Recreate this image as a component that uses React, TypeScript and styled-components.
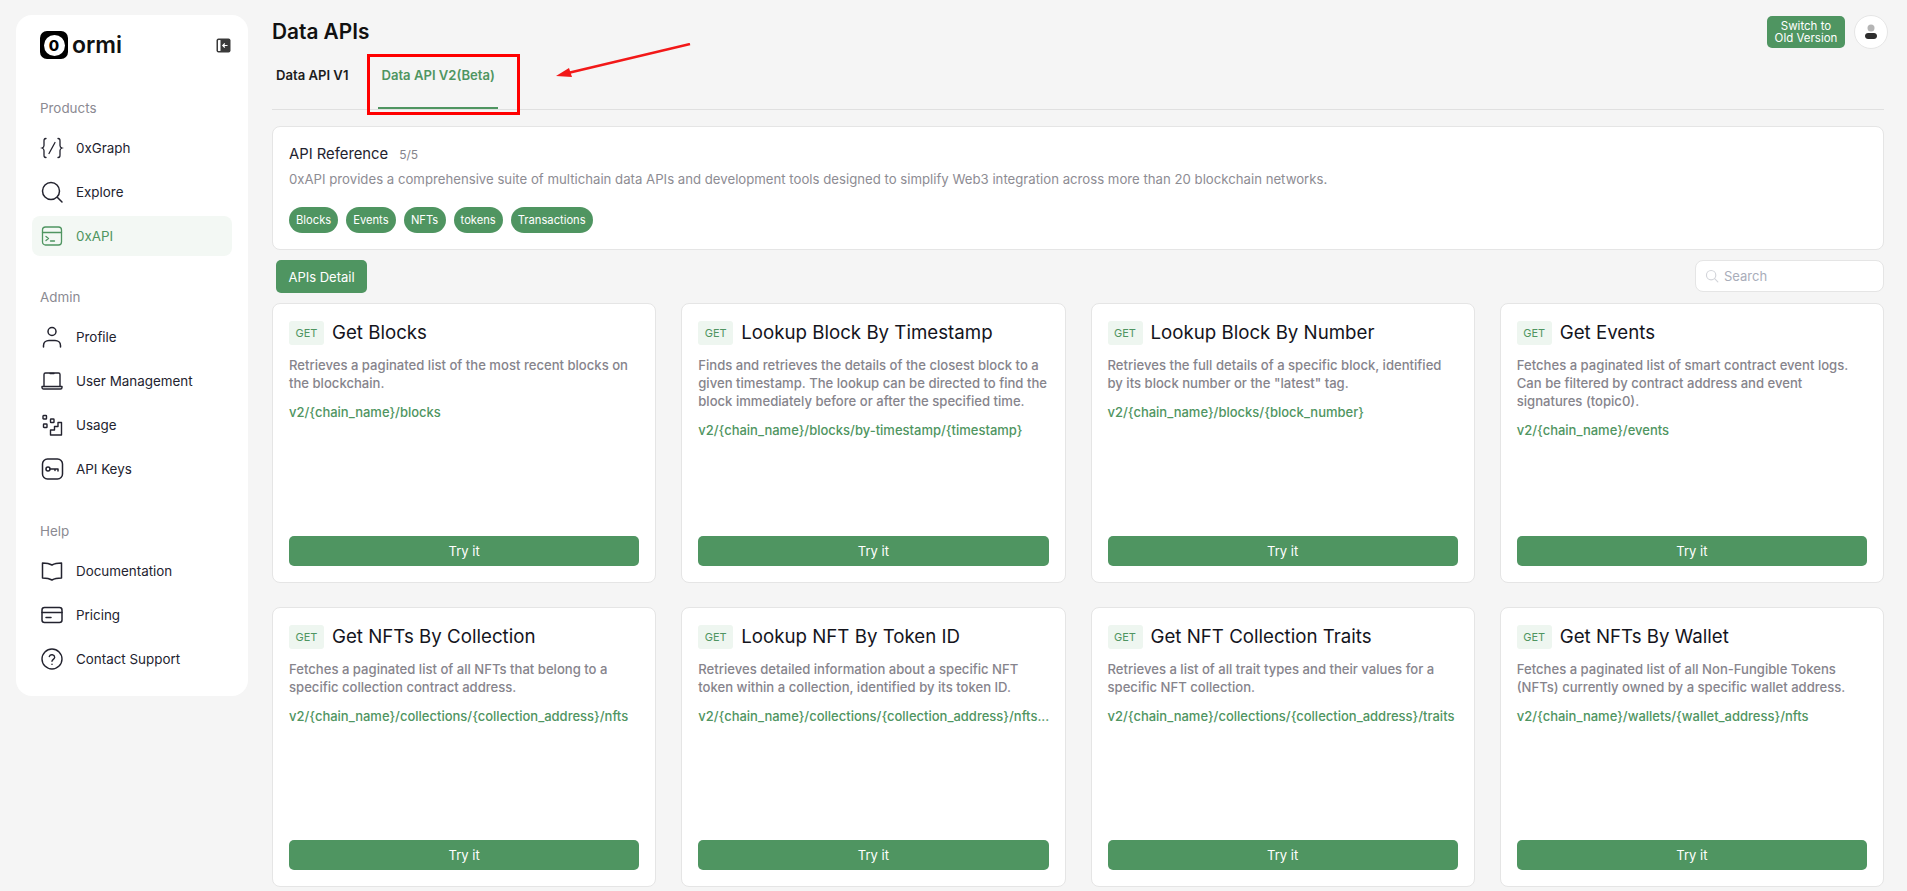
import styled, { createGlobalStyle } from "styled-components";

const GREEN = "#4f9561";

const GlobalStyle = createGlobalStyle`
  html, body {
    margin: 0;
    padding: 0;
    height: 891px;
    overflow: hidden;
    background: #f5f5f5;
    font-family: "Inter", "Liberation Sans", sans-serif;
  }
  * {
    box-sizing: border-box;
  }
`;

const IconCode = () => (
  <svg width="24" height="24" viewBox="0 0 24 24" fill="none" stroke="currentColor" strokeWidth="1.3" strokeLinecap="round">
    <path d="M6 2.500C3.800 2.500 4 4 4 6v3.500c0 1.300-.6 2-2 2.500 1.400.5 2 1.200 2 2.500V18c0 2-.2 3.500 2 3.500" />
    <path d="M18 2.500c2.200 0 2 1.500 2 3.500v3.500c0 1.300.6 2 2 2.500-1.400.5-2 1.200-2 2.500V18c0 2 .2 3.500-2 3.500" />
    <path d="M15 6.500 9 17.500" />
  </svg>
);
const IconSearch = () => (
  <svg width="24" height="24" viewBox="0 0 24 24" fill="none" stroke="currentColor" strokeWidth="1.5" strokeLinecap="round">
    <circle cx="11" cy="11" r="8.500" />
    <path d="m17.500 17.500 4.500 4.500" />
  </svg>
);
const IconTerminal = () => (
  <svg width="24" height="24" viewBox="0 0 24 24" fill="none" stroke="currentColor" strokeWidth="1.3" strokeLinecap="round" strokeLinejoin="round">
    <rect x="2.500" y="3" width="19" height="18" rx="3" />
    <path d="M2.500 8.500h19" />
    <path d="m6 12.500 2.500 2-2.500 2" />
    <path d="M10.500 17h4" />
  </svg>
);
const IconUser = () => (
  <svg width="24" height="24" viewBox="0 0 24 24" fill="none" stroke="currentColor" strokeWidth="1.5" strokeLinecap="round">
    <circle cx="12" cy="6.500" r="4" />
    <path d="M3.500 22v-1.500c0-3 2.500-5 5.500-5h6c3 0 5.500 2 5.500 5V22" />
  </svg>
);
const IconLaptop = () => (
  <svg width="24" height="24" viewBox="0 0 24 24" fill="none" stroke="currentColor" strokeWidth="1.4" strokeLinecap="round" strokeLinejoin="round">
    <path d="M4 17V5.500C4 4.700 4.700 4 5.500 4h13c.8 0 1.500.7 1.500 1.500V17" />
    <path d="M2 17.500h20v1c0 .8-.7 1.500-1.500 1.500h-17C2.700 20 2 19.300 2 18.500z" />
    <path d="M10 4.500h4" />
  </svg>
);
const IconUsage = () => (
  <svg width="24" height="24" viewBox="0 0 24 24" fill="none" stroke="currentColor" strokeWidth="1.400" strokeLinejoin="round">
    <rect x="3" y="2.500" width="3.500" height="3.500" rx=".6" />
    <rect x="10.500" y="6" width="3.500" height="3.500" rx=".6" />
    <rect x="3.500" y="11" width="3.500" height="3.500" rx=".6" />
    <path d="M21.500 9.500v12.500h-11v-5h4v-3.500h3.500V9.500z" />
  </svg>
);
const IconKey = () => (
  <svg width="24" height="24" viewBox="0 0 24 24" fill="none" stroke="currentColor" strokeWidth="1.500" strokeLinecap="round" strokeLinejoin="round">
    <rect x="2.500" y="2" width="20" height="20" rx="5" />
    <circle cx="8" cy="12" r="2" />
    <path d="M10 12h8v2M15 12v1.500" />
  </svg>
);
const IconBook = () => (
  <svg width="24" height="24" viewBox="0 0 24 24" fill="none" stroke="currentColor" strokeWidth="1.500" strokeLinejoin="round">
    <path d="M2.500 4c3.500 0 7 .5 9.500 2 2.500-1.500 6-2 9.500-2v15c-3.500 0-7 .5-9.500 2-2.500-1.500-6-2-9.500-2z" />
  </svg>
);
const IconCard = () => (
  <svg width="24" height="24" viewBox="0 0 24 24" fill="none" stroke="currentColor" strokeWidth="1.500" strokeLinecap="round">
    <rect x="2" y="4.500" width="20" height="15" rx="2.500" />
    <path d="M2 9.500h20" />
    <path d="M6 14.500h5" />
  </svg>
);
const IconHelp = () => (
  <svg width="24" height="24" viewBox="0 0 24 24" fill="none" stroke="currentColor" strokeWidth="1.400" strokeLinecap="round">
    <circle cx="12" cy="12" r="10" />
    <path d="M9.300 9.500a2.800 2.800 0 0 1 5.400.8c0 1.800-2.700 2.300-2.700 4" />
    <path d="M12 17.300v.1" />
  </svg>
);

const navGroups = [
  {
    title: "Products",
    items: [
      { label: "0xGraph", icon: <IconCode /> },
      { label: "Explore", icon: <IconSearch /> },
      { label: "0xAPI", icon: <IconTerminal />, active: true },
    ],
  },
  {
    title: "Admin",
    items: [
      { label: "Profile", icon: <IconUser /> },
      { label: "User Management", icon: <IconLaptop /> },
      { label: "Usage", icon: <IconUsage /> },
      { label: "API Keys", icon: <IconKey /> },
    ],
  },
  {
    title: "Help",
    items: [
      { label: "Documentation", icon: <IconBook /> },
      { label: "Pricing", icon: <IconCard /> },
      { label: "Contact Support", icon: <IconHelp /> },
    ],
  },
];

const tags = ["Blocks", "Events", "NFTs", "tokens", "Transactions"];

const apis = [
  {
    name: "Get Blocks",
    desc: "Retrieves a paginated list of the most recent blocks on the blockchain.",
    path: "v2/{chain_name}/blocks",
  },
  {
    name: "Lookup Block By Timestamp",
    desc: "Finds and retrieves the details of the closest block to a given timestamp. The lookup can be directed to find the block immediately before or after the specified time.",
    path: "v2/{chain_name}/blocks/by-timestamp/{timestamp}",
  },
  {
    name: "Lookup Block By Number",
    desc: 'Retrieves the full details of a specific block, identified by its block number or the "latest" tag.',
    path: "v2/{chain_name}/blocks/{block_number}",
  },
  {
    name: "Get Events",
    desc: "Fetches a paginated list of smart contract event logs. Can be filtered by contract address and event signatures (topic0).",
    path: "v2/{chain_name}/events",
  },
  {
    name: "Get NFTs By Collection",
    desc: "Fetches a paginated list of all NFTs that belong to a specific collection contract address.",
    path: "v2/{chain_name}/collections/{collection_address}/nfts",
  },
  {
    name: "Lookup NFT By Token ID",
    desc: "Retrieves detailed information about a specific NFT token within a collection, identified by its token ID.",
    path: "v2/{chain_name}/collections/{collection_address}/nfts...",
  },
  {
    name: "Get NFT Collection Traits",
    desc: "Retrieves a list of all trait types and their values for a specific NFT collection.",
    path: "v2/{chain_name}/collections/{collection_address}/traits",
  },
  {
    name: "Get NFTs By Wallet",
    desc: "Fetches a paginated list of all Non-Fungible Tokens (NFTs) currently owned by a specific wallet address.",
    path: "v2/{chain_name}/wallets/{wallet_address}/nfts",
  },
];

export default function App() {
  return (
    <>
      <GlobalStyle />
      <Page>
        <Sidebar>
          <LogoRow>
            <Logo>
              <LogoMark>
                <LogoZero>0</LogoZero>
              </LogoMark>
              <LogoText>ormi</LogoText>
            </Logo>
            <CollapseButton>
              <svg width="15" height="15" viewBox="0 0 15 15">
                <rect x="0.500" y="0.500" width="14" height="14" rx="2" fill="#3a3a3a" />
                <rect x="2" y="2" width="2.500" height="11" rx=".5" fill="#fff" />
                <path d="M11.500 7.500H7M8.800 5.500l-2 2 2 2" fill="none" stroke="#fff" strokeWidth="1.200" />
              </svg>
            </CollapseButton>
          </LogoRow>
          {navGroups.map((group) => (
            <NavGroup key={group.title}>
              <GroupTitle>{group.title}</GroupTitle>
              <NavList>
                {group.items.map((item) => (
                  <NavItem key={item.label} $active={item.active}>
                    <NavIcon>{item.icon}</NavIcon>
                    {item.label}
                  </NavItem>
                ))}
              </NavList>
            </NavGroup>
          ))}
        </Sidebar>

        <Main>
          <Header>
            <Title>Data APIs</Title>
            <HeaderActions>
              <SwitchButton>
                Switch to
                <br />
                Old Version
              </SwitchButton>
              <Avatar>
                <svg width="14" height="16" viewBox="0 0 14 16">
                  <circle cx="7" cy="4" r="3.500" fill="#b5b5b5" />
                  <path d="M1 12c0-2 1.500-3 3-3h6c1.500 0 3 1 3 3s-1.500 3-3 3H4c-1.500 0-3-1-3-3z" fill="#2e2e2e" />
                </svg>
              </Avatar>
            </HeaderActions>
          </Header>

          <Tabs>
            <Tab>Data API V1</Tab>
            <Tab $active>Data API V2(Beta)</Tab>
            <RedBox />
            <RedArrow width="140" height="40" viewBox="0 0 140 40">
              <path d="M136 1 14 30" stroke="#f21818" strokeWidth="2.500" fill="none" />
              <path d="M2 33 15 25 18 34z" fill="#f21818" />
            </RedArrow>
          </Tabs>

          <ReferenceCard>
            <ReferenceHeading>
              <ReferenceTitle>API Reference</ReferenceTitle>
              <ReferenceCount>5/5</ReferenceCount>
            </ReferenceHeading>
            <ReferenceText>
              0xAPI provides a comprehensive suite of multichain data APIs and development tools designed to simplify Web3 integration across more than 20 blockchain networks.
            </ReferenceText>
            <TagRow>
              {tags.map((tag) => (
                <Tag key={tag}>{tag}</Tag>
              ))}
            </TagRow>
          </ReferenceCard>

          <Toolbar>
            <DetailButton>APIs Detail</DetailButton>
            <SearchBox>
              <svg width="14" height="14" viewBox="0 0 24 24" fill="none" stroke="#d3d5da" strokeWidth="2" strokeLinecap="round">
                <circle cx="10.500" cy="10.500" r="8" />
                <path d="m16.500 16.500 5.500 5.500" />
              </svg>
              <SearchInput placeholder="Search" />
            </SearchBox>
          </Toolbar>

          <ApiGrid>
            {apis.map((api) => (
              <ApiCard key={api.name}>
                <ApiHeading>
                  <MethodBadge>GET</MethodBadge>
                  <ApiName>{api.name}</ApiName>
                </ApiHeading>
                <ApiDesc>{api.desc}</ApiDesc>
                <ApiPath>{api.path}</ApiPath>
                <TryButton>Try it</TryButton>
              </ApiCard>
            ))}
          </ApiGrid>
        </Main>
      </Page>
    </>
  );
}

const Page = styled.div`
  display: flex;
  align-items: flex-start;
  gap: 24px;
  height: 891px;
  padding: 15px 23px 0 16px;
  overflow: hidden;
`;

const Sidebar = styled.aside`
  flex: 0 0 232px;
  height: 681px;
  padding: 16px 16px 0;
  background: #fff;
  border-radius: 16px;
`;

const LogoRow = styled.div`
  display: flex;
  align-items: center;
  justify-content: space-between;
  height: 28px;
  padding-left: 8px;
  margin-bottom: 38px;
`;

const Logo = styled.div`
  display: flex;
  align-items: center;
  gap: 4px;
`;

const LogoMark = styled.div`
  display: flex;
  align-items: center;
  justify-content: center;
  width: 28px;
  height: 28px;
  background: #000;
  border-radius: 7px;
`;

const LogoZero = styled.span`
  display: flex;
  align-items: center;
  justify-content: center;
  width: 21px;
  height: 21px;
  background: #fff;
  border-radius: 50%;
  color: #000;
  font-size: 15px;
  font-weight: 800;
`;

const LogoText = styled.span`
  color: #111;
  font-size: 23px;
  font-weight: 600;
  line-height: 28px;
`;

const CollapseButton = styled.div`
  display: flex;
  margin-right: 1px;
`;

const NavGroup = styled.section`
  margin-bottom: 30px;

  &:last-child {
    margin-top: 31px;
  }
`;

const GroupTitle = styled.div`
  height: 21px;
  margin-bottom: 10px;
  padding: 1px 0 0 8px;
  color: #8b8a92;
  font-size: 13.400px;
  line-height: 20px;
`;

const NavList = styled.div`
  display: flex;
  flex-direction: column;
  gap: 4px;
`;

const NavItem = styled.div<{ $active?: boolean }>`
  display: flex;
  align-items: center;
  gap: 12px;
  height: 40px;
  padding: 0 8px;
  border-radius: 8px;
  background: ${(props) => (props.$active ? "#f3f8f4" : "transparent")};
  color: ${(props) => (props.$active ? GREEN : "#23232f")};
  font-size: 13.400px;
`;

const NavIcon = styled.span`
  display: flex;
  width: 24px;
  height: 24px;
`;

const Main = styled.main`
  flex: 1;
  min-width: 0;
`;

const Header = styled.header`
  display: flex;
  align-items: flex-start;
  justify-content: space-between;
  height: 45px;
`;

const Title = styled.h1`
  margin: 5px 0 0;
  color: #111;
  font-size: 20.800px;
  font-weight: 600;
  line-height: 24px;
`;

const HeaderActions = styled.div`
  display: flex;
  align-items: center;
  gap: 9px;
  margin-right: -4px;
`;

const SwitchButton = styled.button`
  width: 78px;
  height: 32px;
  padding: 0;
  border: none;
  border-radius: 5px;
  background: ${GREEN};
  color: #fff;
  font-family: inherit;
  font-size: 11.500px;
  line-height: 12px;
`;

const Avatar = styled.div`
  display: flex;
  align-items: center;
  justify-content: center;
  width: 34px;
  height: 34px;
  background: #fff;
  border: 1px solid #e6e6e6;
  border-radius: 50%;
`;

const Tabs = styled.nav`
  position: relative;
  display: flex;
  gap: 27px;
  height: 50px;
  border-bottom: 1px solid #e0e0e0;
`;

const Tab = styled.div<{ $active?: boolean }>`
  height: 49px;
  padding: 6px 3px 0 4px;
  border-bottom: 2px solid ${(props) => (props.$active ? GREEN : "transparent")};
  color: ${(props) => (props.$active ? GREEN : "#1c1c1c")};
  font-size: 13.100px;
  font-weight: 600;
  line-height: 18px;

  & + & {
    padding-left: 3px;
  }
`;

const RedBox = styled.div`
  position: absolute;
  left: 95px;
  top: -6px;
  width: 153px;
  height: 61px;
  border: 3px solid #f00;
  pointer-events: none;
`;

const RedArrow = styled.svg`
  position: absolute;
  left: 282px;
  top: -17px;
`;

const ReferenceCard = styled.section`
  height: 124px;
  margin-top: 16px;
  padding: 16px;
  background: #fff;
  border: 1px solid #e5e5e5;
  border-radius: 8px;
`;

const ReferenceHeading = styled.div`
  display: flex;
  align-items: baseline;
  gap: 11px;
`;

const ReferenceTitle = styled.span`
  color: #23232f;
  font-size: 14.800px;
  line-height: 22px;
`;

const ReferenceCount = styled.span`
  color: #85848c;
  font-size: 12px;
`;

const ReferenceText = styled.p`
  margin: 4px 0 0;
  color: #8d8c93;
  font-size: 13.200px;
  line-height: 20px;
`;

const TagRow = styled.div`
  display: flex;
  gap: 8px;
  margin-top: 18px;
`;

const Tag = styled.span`
  display: flex;
  align-items: center;
  justify-content: center;
  min-width: 42px;
  height: 26px;
  padding: 0 7px;
  border-radius: 13px;
  background: ${GREEN};
  color: #fff;
  font-size: 11.200px;
  font-weight: 400;
`;

const Toolbar = styled.div`
  display: flex;
  align-items: flex-start;
  justify-content: space-between;
  height: 33px;
  margin-top: 10px;
  padding-left: 4px;
`;

const DetailButton = styled.button`
  width: 91px;
  height: 33px;
  padding: 0;
  border: none;
  border-radius: 5px;
  background: ${GREEN};
  color: #fff;
  font-family: inherit;
  font-size: 13px;
  font-weight: 400;
`;

const SearchBox = styled.label`
  display: flex;
  align-items: center;
  gap: 3px;
  width: 189px;
  height: 32px;
  padding: 0 9px;
  background: #fff;
  border: 1px solid #e5e5e5;
  border-radius: 8px;
`;

const SearchInput = styled.input`
  flex: 1;
  min-width: 0;
  border: none;
  outline: none;
  background: transparent;
  color: #333;
  font-family: inherit;
  font-size: 13px;

  &::placeholder {
    color: #a9adba;
    opacity: 1;
  }
`;

const ApiGrid = styled.div`
  display: grid;
  grid-template-columns: repeat(4, 1fr);
  gap: 24px 25px;
  margin-top: 10px;
`;

const ApiCard = styled.article`
  display: flex;
  flex-direction: column;
  height: 280px;
  min-width: 0;
  padding: 16px;
  background: #fff;
  border: 1px solid #e5e5e5;
  border-radius: 8px;
`;

const ApiHeading = styled.div`
  display: flex;
  align-items: center;
  gap: 8px;
  height: 24px;
  margin-top: 1px;
`;

const MethodBadge = styled.span`
  display: flex;
  align-items: center;
  justify-content: center;
  width: 35px;
  height: 24px;
  border-radius: 3px;
  background: #eef6f0;
  color: ${GREEN};
  font-size: 11px;
`;

const ApiName = styled.h3`
  margin: -2px 0 0;
  color: #14141c;
  font-size: 18.700px;
  font-weight: 400;
  white-space: nowrap;
`;

const ApiDesc = styled.p`
  margin: 11px 0 0;
  color: #86848c;
  font-size: 13.100px;
  font-weight: 500;
  line-height: 18px;
`;

const ApiPath = styled.div`
  margin-top: 11px;
  color: ${GREEN};
  font-size: 13px;
  font-weight: 500;
  line-height: 18px;
  white-space: nowrap;
`;

const TryButton = styled.button`
  flex: none;
  height: 30px;
  margin-top: auto;
  padding: 0;
  border: none;
  border-radius: 5px;
  background: ${GREEN};
  color: #fff;
  font-family: inherit;
  font-size: 13px;
  font-weight: 400;
`;
